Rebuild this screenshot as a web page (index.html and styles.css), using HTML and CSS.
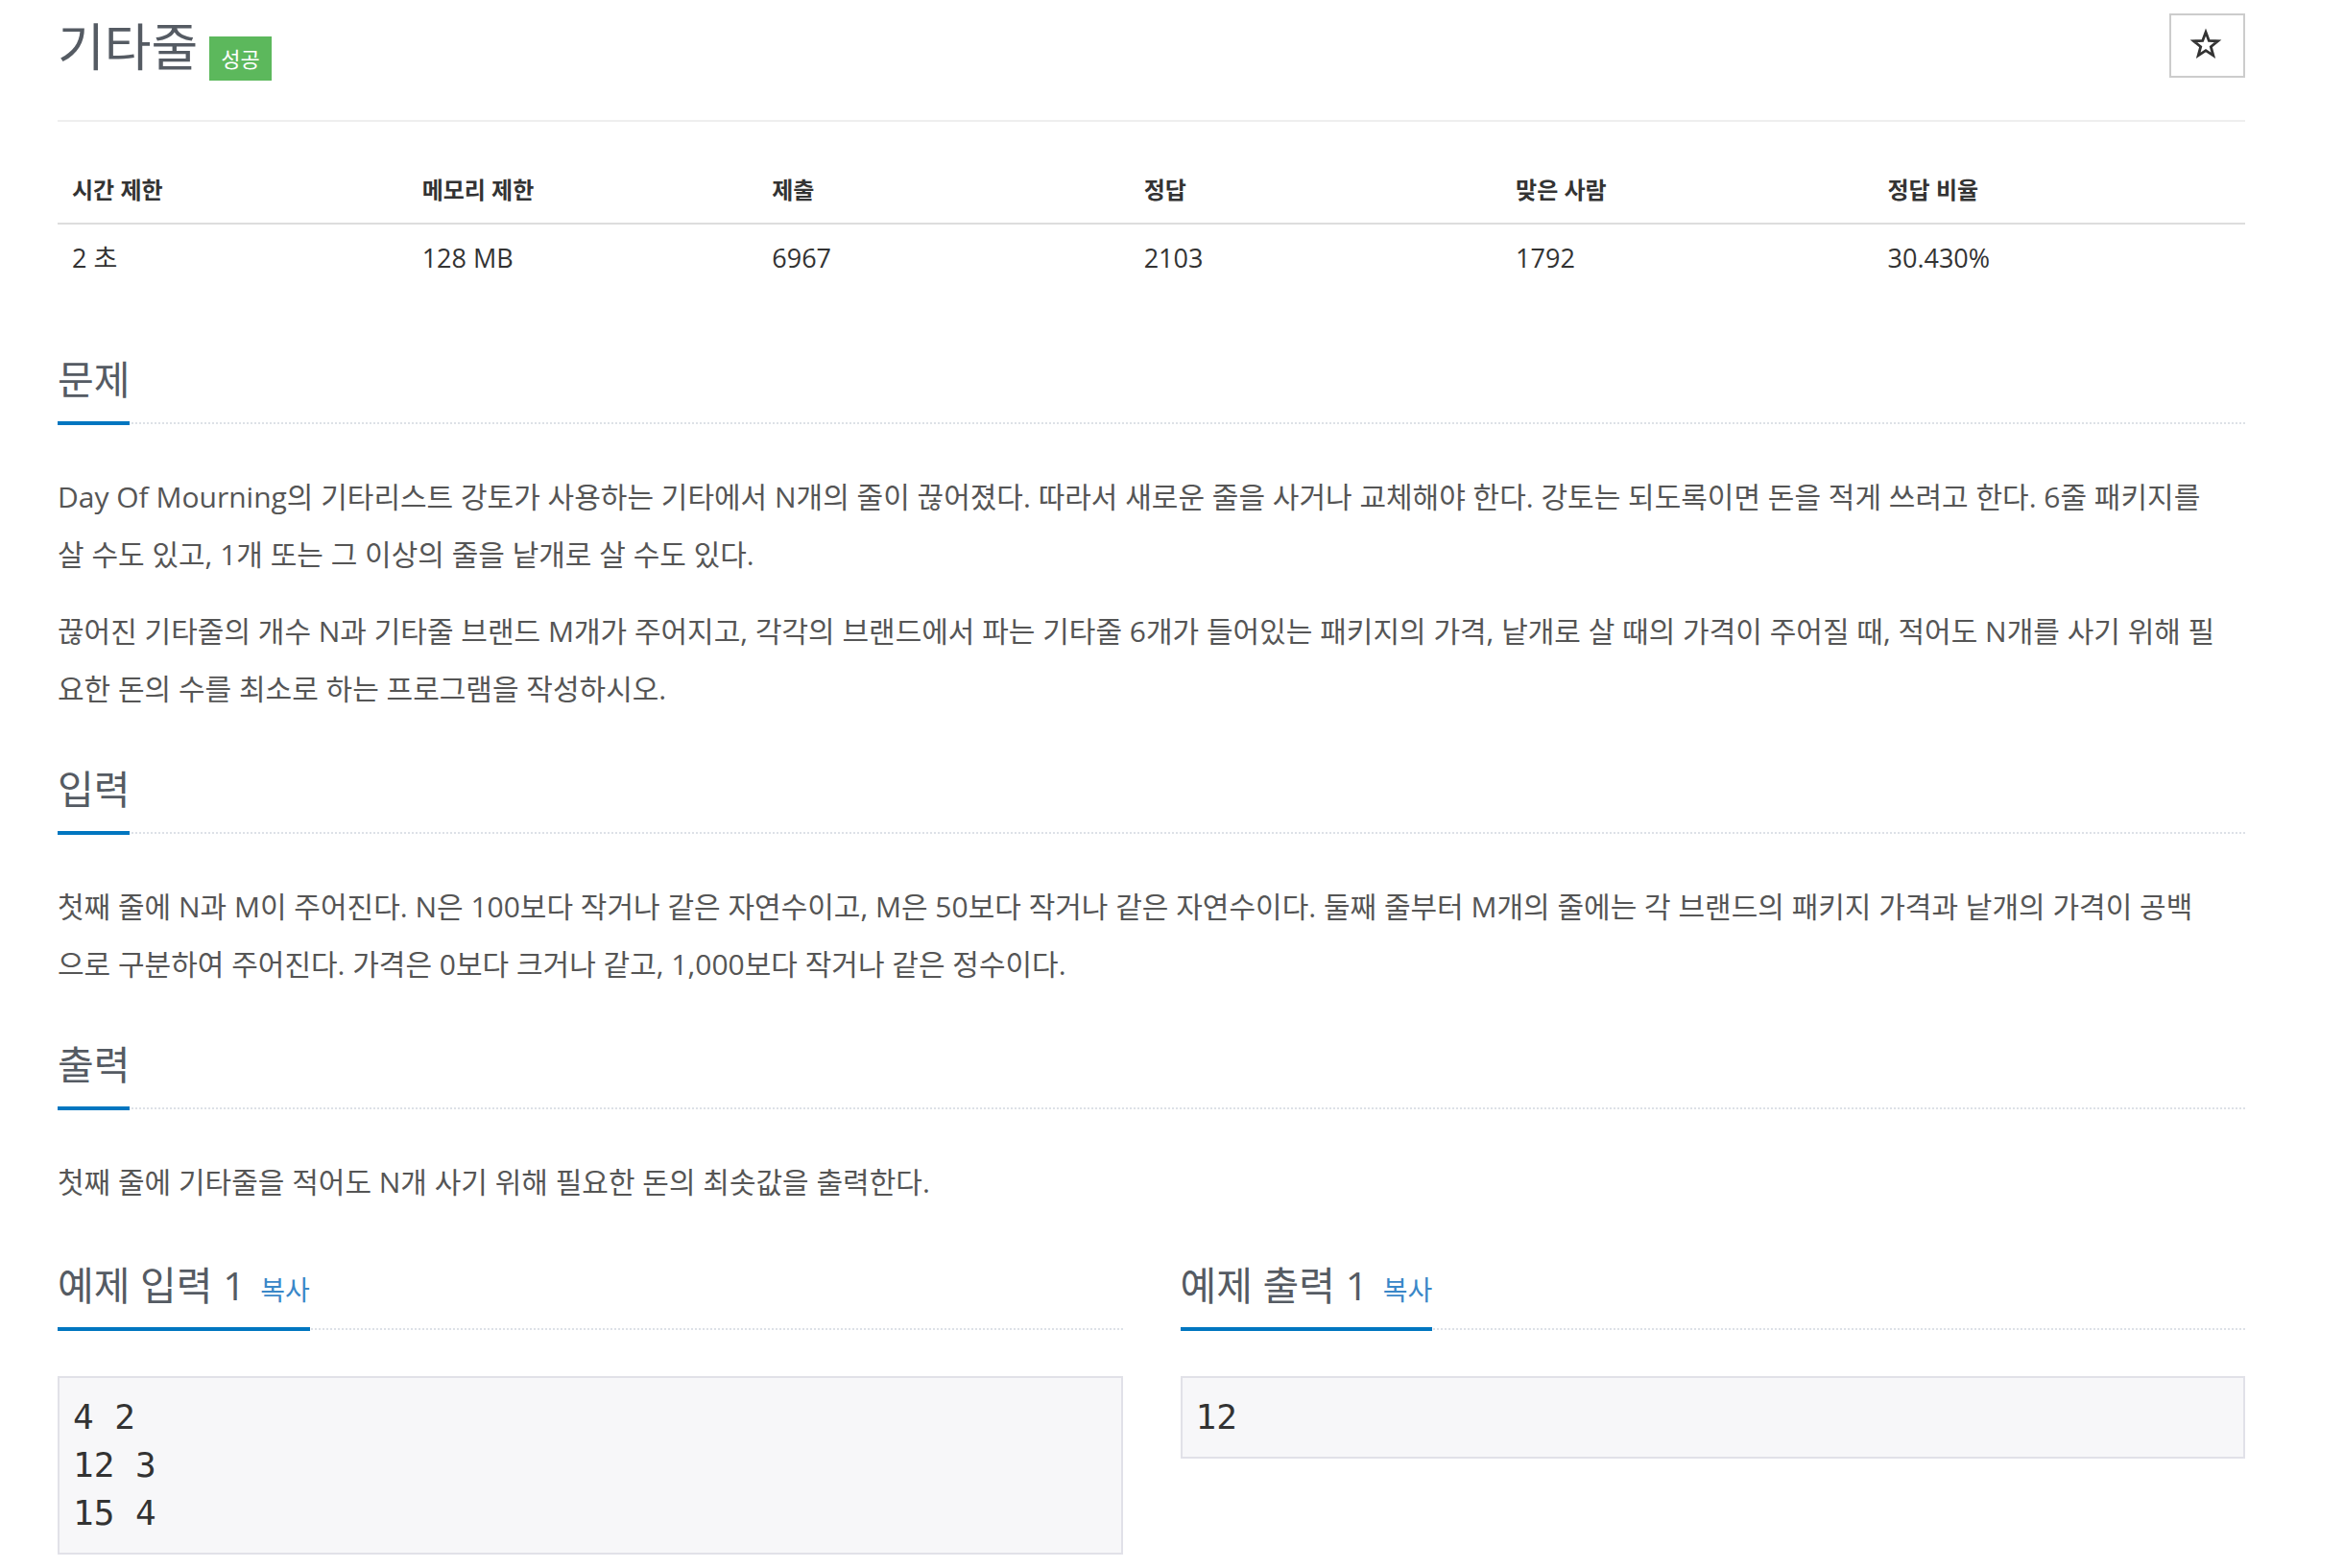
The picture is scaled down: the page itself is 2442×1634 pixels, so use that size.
FILE: index.html
```html
<!DOCTYPE html>
<html lang="ko">
<head>
<meta charset="utf-8">
<title>기타줄</title>
<link rel="stylesheet" href="styles.css">
</head>
<body>
<div class="page">
  <header class="title-row">
    <h1 class="title"><span class="title-text">기타줄</span><span class="badge">성공</span></h1>
    <button class="star-btn" type="button" aria-label="즐겨찾기">
      <svg class="star-icon" width="34" height="32" viewBox="0 0 34 32">
        <polygon points="17,3.5 20.3,12.4 29.6,12.8 22.3,18.7 24.8,27.8 17,22.6 9.2,27.8 11.7,18.7 4.4,12.8 13.7,12.4" fill="none" stroke="#333" stroke-width="2.8" stroke-linejoin="miter"/>
      </svg>
    </button>
  </header>

  <table class="info">
    <colgroup>
      <col class="c16"><col class="c16"><col class="c17"><col class="c17"><col class="c17"><col class="c17">
    </colgroup>
    <thead>
      <tr><th>시간 제한</th><th>메모리 제한</th><th>제출</th><th>정답</th><th>맞은 사람</th><th>정답 비율</th></tr>
    </thead>
    <tbody>
      <tr><td>2 초</td><td>128 MB</td><td>6967</td><td>2103</td><td>1792</td><td>30.430%</td></tr>
    </tbody>
  </table>

  <section class="section first">
    <div class="headline"><h2>문제</h2></div>
    <div class="text">
      <p>Day Of Mourning의 기타리스트 강토가 사용하는 기타에서 N개의 줄이 끊어졌다. 따라서 새로운 줄을 사거나 교체해야 한다. 강토는 되도록이면 돈을 적게 쓰려고 한다. 6줄 패키지를<br>살 수도 있고, 1개 또는 그 이상의 줄을 낱개로 살 수도 있다.</p>
      <p>끊어진 기타줄의 개수 N과 기타줄 브랜드 M개가 주어지고, 각각의 브랜드에서 파는 기타줄 6개가 들어있는 패키지의 가격, 낱개로 살 때의 가격이 주어질 때, 적어도 N개를 사기 위해 필<br>요한 돈의 수를 최소로 하는 프로그램을 작성하시오.</p>
    </div>
  </section>

  <section class="section">
    <div class="headline"><h2>입력</h2></div>
    <div class="text">
      <p>첫째 줄에 N과 M이 주어진다. N은 100보다 작거나 같은 자연수이고, M은 50보다 작거나 같은 자연수이다. 둘째 줄부터 M개의 줄에는 각 브랜드의 패키지 가격과 낱개의 가격이 공백<br>으로 구분하여 주어진다. 가격은 0보다 크거나 같고, 1,000보다 작거나 같은 정수이다.</p>
    </div>
  </section>

  <section class="section">
    <div class="headline"><h2>출력</h2></div>
    <div class="text">
      <p>첫째 줄에 기타줄을 적어도 N개 사기 위해 필요한 돈의 최솟값을 출력한다.</p>
    </div>
  </section>

  <div class="samples">
    <section class="sample">
      <div class="headline"><h2>예제 입력 1 <button class="copy" type="button">복사</button></h2></div>
      <pre class="sample-data">4 2
12 3
15 4</pre>
    </section>
    <section class="sample">
      <div class="headline"><h2>예제 출력 1 <button class="copy" type="button">복사</button></h2></div>
      <pre class="sample-data">12</pre>
    </section>
  </div>
</div>
</body>
</html>
```

FILE: styles.css
```css
html, body {
  margin: 0;
  padding: 0;
  background: #fff;
}

body {
  font-family: "Open Sans", "Noto Sans CJK KR", sans-serif;
  color: #555;
}

.page {
  width: 2279px;
  margin-left: 60px;
}

/* Title row */
.title-row {
  display: flex;
  justify-content: space-between;
  align-items: flex-start;
  padding: 14px 0 41px;
  border-bottom: 2px solid #eee;
}

.title {
  display: flex;
  align-items: flex-start;
  margin: 4px 0 0;
  font-weight: normal;
}

.title-text {
  font-size: 53px;
  line-height: 62px;
  color: #555b63;
}

.badge {
  margin: 20px 0 0 12px;
  padding: 0 12px;
  background: #5cb85c;
  color: #fff;
  font-size: 22px;
  line-height: 46px;
}

.star-btn {
  display: flex;
  align-items: center;
  justify-content: center;
  width: 79px;
  height: 67px;
  margin: 0;
  padding: 0 4px 4px 0;
  background: #fff;
  border: 2px solid #ccc;
}

.star-icon {
  overflow: visible;
}

/* Info table */
.info {
  width: 100%;
  margin-top: 35px;
  border-collapse: collapse;
  table-layout: fixed;
  color: #333;
}

.c16 { width: 16%; }
.c17 { width: 17%; }

.info th {
  padding: 16px 15px 14px;
  font-size: 24px;
  font-weight: 700;
  line-height: 40px;
  text-align: left;
  border-bottom: 2px solid #ddd;
}

.info td {
  padding: 15px 15px 16px;
  font-size: 27px;
  line-height: 40px;
}

/* Sections */
.section {
  margin-top: 52px;
}

.section.first {
  margin-top: 68px;
}

.headline {
  display: flex;
  border-bottom: 2px dotted #dde1e7;
}

.headline h2 {
  margin: 0 0 -3px;
  padding-bottom: 22px;
  border-bottom: 4px solid #0076c0;
  font-size: 41px;
  line-height: 44px;
  font-weight: normal;
  color: #555b63;
  white-space: nowrap;
}

.text {
  margin-top: 46px;
  font-size: 30px;
  line-height: 60px;
  color: #555;
}

.text p {
  margin: 0 0 20px;
}

.text p:last-child {
  margin-bottom: 0;
}

/* Samples */
.samples {
  display: grid;
  grid-template-columns: 1fr 1fr;
  column-gap: 60px;
  align-items: start;
  margin-top: 55px;
}

.copy {
  margin: 0 0 0 5px;
  padding: 0;
  background: none;
  border: 0;
  font-family: inherit;
  font-size: 28px;
  line-height: 1;
  color: #3a87c8;
  cursor: pointer;
}

.sample-data {
  margin: 48px 0 0;
  padding: 16px 16px 16px 14px;
  background: #f7f7f9;
  border: 2px solid #e1e1e8;
  font-family: "DejaVu Sans Mono", monospace;
  font-size: 36px;
  line-height: 50px;
  color: #333;
}
```
